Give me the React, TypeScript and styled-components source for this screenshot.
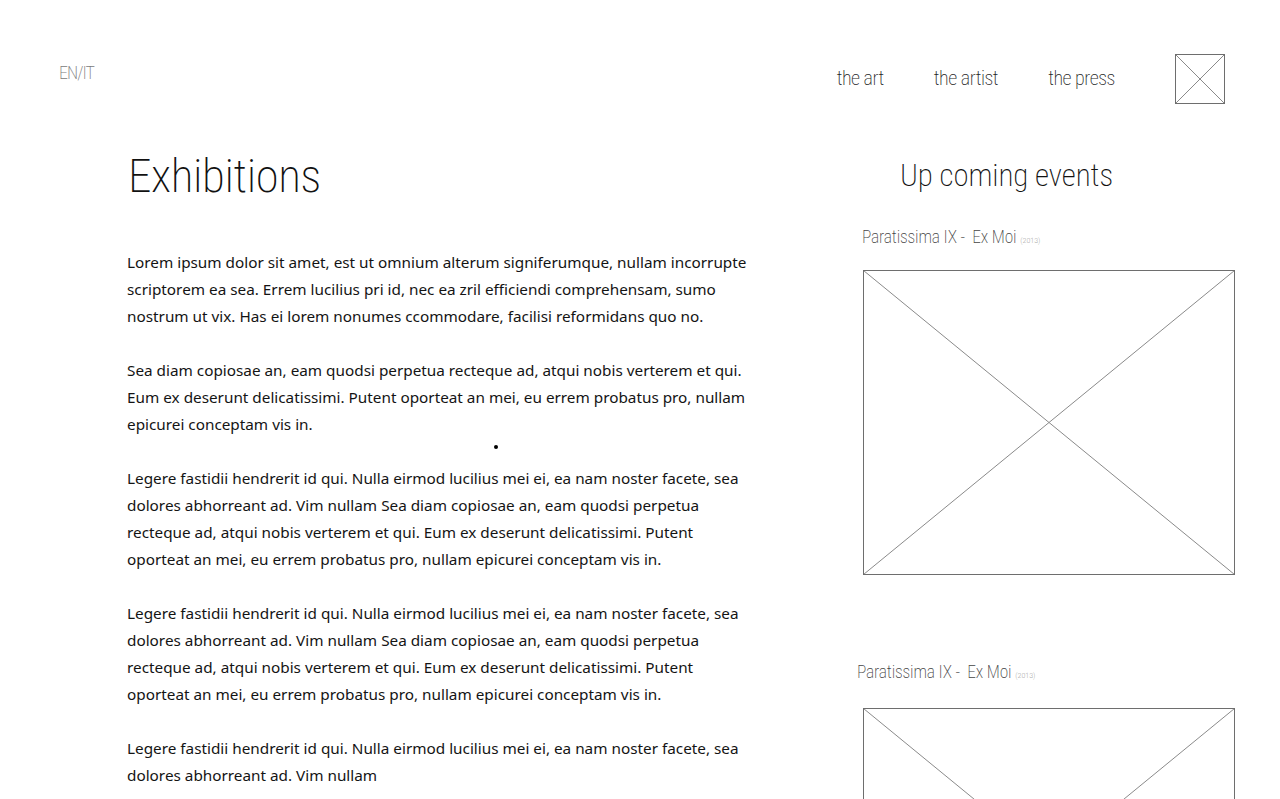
import React from "react";
import styled, { createGlobalStyle } from "styled-components";

const GlobalStyle = createGlobalStyle`
  html, body {
    margin: 0;
    padding: 0;
    background: #ffffff;
    overflow: hidden;
  }
  * { box-sizing: border-box; }
`;

const Page = styled.div`
  width: 1280px;
  height: 799px;
  overflow: hidden;
  background: #fff;
`;

const Header = styled.header`
  display: flex;
  align-items: flex-start;
  justify-content: space-between;
  padding: 54px 55px 0 59px;
  height: 104px;
`;

const Lang = styled.div`
  margin-top: 10px;
  font-family: Roboto, "Noto Sans", sans-serif;
  font-weight: 200;
  font-stretch: 75%;
  font-size: 18px;
  line-height: 1;
  letter-spacing: -1px;
  color: #7a7a7a;
`;

const Right = styled.div`
  display: flex;
  align-items: flex-start;
  gap: 60px;
`;

const Nav = styled.nav`
  display: flex;
  gap: 50px;
  margin-top: 14px;
`;

const NavLink = styled.a`
  font-family: Roboto, "Noto Sans", sans-serif;
  font-weight: 200;
  font-stretch: 75%;
  font-size: 20px;
  line-height: 1;
  letter-spacing: -0.5px;
  color: #1e1e1e;
  text-decoration: none;
`;

const LogoBox = styled.div`
  width: 50px;
  height: 50px;
`;

const Main = styled.main`
  display: grid;
  grid-template-columns: 630px 378px;
  column-gap: 100px;
  padding: 48px 45px 0 127px;
`;

const TextColumn = styled.section`
  display: block;
`;

const Title = styled.h1`
  margin: 0 0 50px 1px;
  font-family: Roboto, "Noto Sans", sans-serif;
  font-weight: 200;
  font-stretch: 75%;
  font-size: 47px;
  line-height: 1;
  letter-spacing: -0.4px;
  color: #111;
`;

const Paragraph = styled.p`
  margin: 0 0 27px 0;
  font-family: "Noto Sans", "Open Sans", sans-serif;
  font-size: 15.3px;
  line-height: 27px;
  color: #141414;
`;

const Dot = styled.span`
  display: block;
  width: 4px;
  height: 4px;
  border-radius: 50%;
  background: #000;
  margin: -20px 0 16px 367px;
`;

const EventsColumn = styled.aside`
  display: flex;
  flex-direction: column;
  padding-top: 8px;
`;

const EventsTitle = styled.h2`
  margin: 0 0 38px 43px;
  font-family: Roboto, "Noto Sans", sans-serif;
  font-weight: 200;
  font-stretch: 75%;
  font-size: 31px;
  line-height: 1;
  letter-spacing: -0.1px;
  color: #111;
`;

const EventItem = styled.article<{ $indent: number }>`
  display: flex;
  flex-direction: column;
  margin-bottom: 89px;
  padding-left: ${(p) => p.$indent}px;
`;

const EventName = styled.h3<{ $gap: number }>`
  margin: 0 0 ${(p) => p.$gap}px 0;
  font-family: Roboto, "Noto Sans", sans-serif;
  font-weight: 200;
  font-stretch: 75%;
  font-size: 17.5px;
  line-height: 1;
  letter-spacing: -0.2px;
  color: #444;
  white-space: pre;
`;

const Year = styled.span`
  font-size: 8px;
  color: #888;
  margin-left: 4px;
  letter-spacing: 0;
`;

const ImageBox = styled.div<{ $shift: number }>`
  width: 372px;
  height: 305px;
  margin-left: ${(p) => p.$shift}px;
  flex-shrink: 0;
`;

const Placeholder: React.FC<{ w: number; h: number }> = ({ w, h }) => (
  <svg width={w} height={h} viewBox={`0 0 ${w} ${h}`} style={{ display: "block" }}>
    <line x1={0.5} y1={0.5} x2={w - 0.5} y2={h - 0.5} stroke="#8a8a8a" strokeWidth={1} />
    <line x1={w - 0.5} y1={0.5} x2={0.5} y2={h - 0.5} stroke="#8a8a8a" strokeWidth={1} />
    <rect x={0.5} y={0.5} width={w - 1} height={h - 1} fill="none" stroke="#6e6e6e" strokeWidth={1} />
  </svg>
);

const paragraphs = [
  "Lorem ipsum dolor sit amet, est ut omnium alterum signiferumque, nullam incorrupte scriptorem ea sea. Errem lucilius pri id, nec ea zril efficiendi comprehensam, sumo nostrum ut vix. Has ei lorem nonumes ccommodare, facilisi reformidans quo no.",
  "Sea diam copiosae an, eam quodsi perpetua recteque ad, atqui nobis verterem et qui. Eum ex deserunt delicatissimi. Putent oporteat an mei, eu errem probatus pro, nullam epicurei conceptam vis in.",
  "Legere fastidii hendrerit id qui. Nulla eirmod lucilius mei ei, ea nam noster facete, sea dolores abhorreant ad. Vim nullam Sea diam copiosae an, eam quodsi perpetua recteque ad, atqui nobis verterem et qui. Eum ex deserunt delicatissimi. Putent oporteat an mei, eu errem probatus pro, nullam epicurei conceptam vis in.",
  "Legere fastidii hendrerit id qui. Nulla eirmod lucilius mei ei, ea nam noster facete, sea dolores abhorreant ad. Vim nullam Sea diam copiosae an, eam quodsi perpetua recteque ad, atqui nobis verterem et qui. Eum ex deserunt delicatissimi. Putent oporteat an mei, eu errem probatus pro, nullam epicurei conceptam vis in.",
  "Legere fastidii hendrerit id qui. Nulla eirmod lucilius mei ei, ea nam noster facete, sea dolores abhorreant ad. Vim nullam",
];

const events = [
  { name: "Paratissima IX -  Ex Moi", year: "(2013)", indent: 5, shift: 1, gap: 23 },
  { name: "Paratissima IX -  Ex Moi", year: "(2013)", indent: 0, shift: 6, gap: 27 },
];

export default function App() {
  return (
    <Page>
      <GlobalStyle />
      <Header>
        <Lang>EN/IT</Lang>
        <Right>
          <Nav>
            <NavLink href="#">the art</NavLink>
            <NavLink href="#">the artist</NavLink>
            <NavLink href="#">the press</NavLink>
          </Nav>
          <LogoBox>
            <Placeholder w={50} h={50} />
          </LogoBox>
        </Right>
      </Header>
      <Main>
        <TextColumn>
          <Title>Exhibitions</Title>
          {paragraphs.map((t, i) => (
            <React.Fragment key={i}>
              <Paragraph>{t}</Paragraph>
              {i === 1 && <Dot />}
            </React.Fragment>
          ))}
        </TextColumn>
        <EventsColumn>
          <EventsTitle>Up coming events</EventsTitle>
          {events.map((e, i) => (
            <EventItem key={i} $indent={e.indent}>
              <EventName $gap={e.gap}>
                {e.name}
                <Year>{e.year}</Year>
              </EventName>
              <ImageBox $shift={e.shift}>
                <Placeholder w={372} h={305} />
              </ImageBox>
            </EventItem>
          ))}
        </EventsColumn>
      </Main>
    </Page>
  );
}
